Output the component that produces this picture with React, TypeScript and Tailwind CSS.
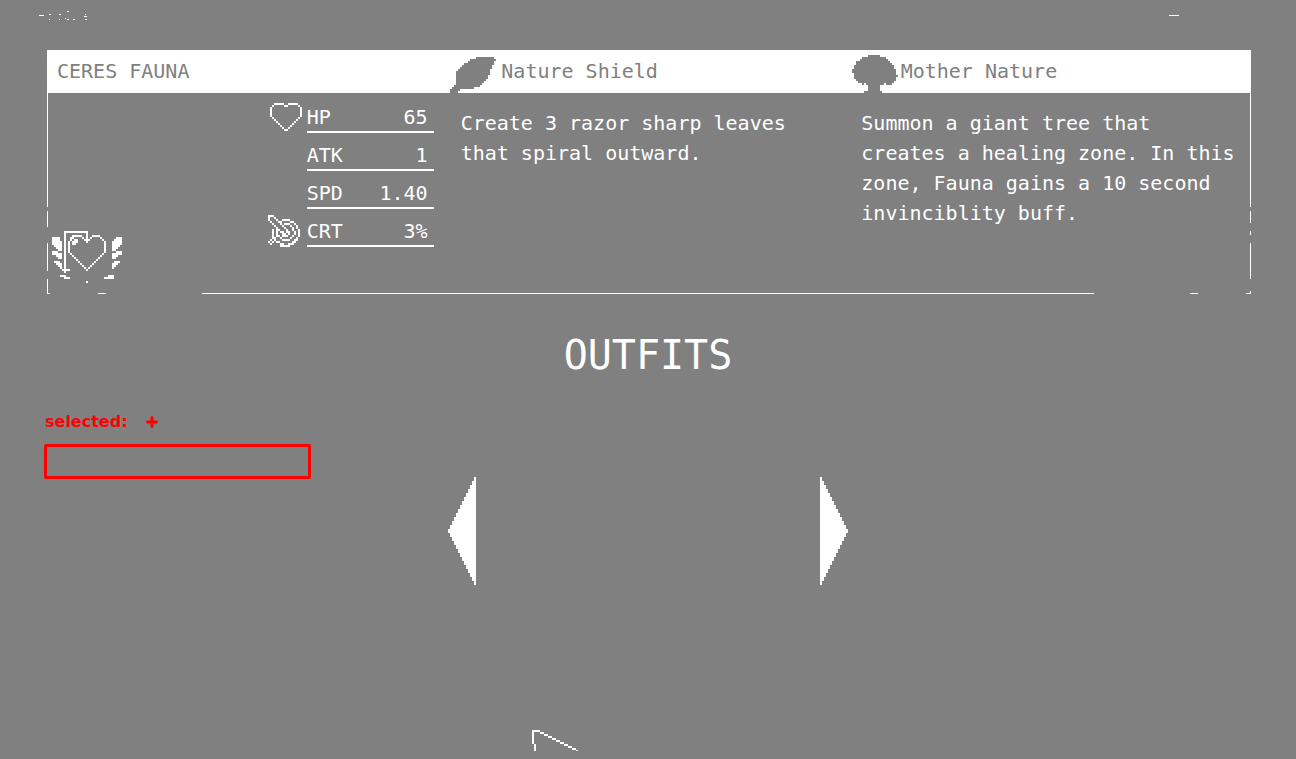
import React from 'react';

type Run = [row: number, from: number, to: number];

/* Draws horizontal runs of square cells, two pixels to a cell. */
function Pixels({ runs, cols, rows, className, label }: {
  runs: Run[]; cols: number; rows: number; className?: string; label: string;
}) {
  return (
    <svg
      role="img"
      aria-label={label}
      width={cols * 2}
      height={rows * 2}
      viewBox={`0 0 ${cols} ${rows}`}
      shapeRendering="crispEdges"
      fill="currentColor"
      className={className}
    >
      {runs.map(([r, a, b], i) => (
        <rect key={i} x={a} y={r} width={b - a + 1} height={1} />
      ))}
    </svg>
  );
}

function toRuns(bitmap: string[]): Run[] {
  const out: Run[] = [];
  bitmap.forEach((line, r) => {
    for (const m of line.matchAll(/#+/g)) out.push([r, m.index, m.index + m[0].length - 1]);
  });
  return out;
}

const heart = toRuns([
  '..#####..#####..',
  '.#.....##.....#.',
  '#..............#',
  '#..............#',
  '#..............#',
  '#..............#',
  '#..............#',
  '.#............#.',
  '..#..........#..',
  '...#........#...',
  '....#......#....',
  '.....#....#.....',
  '......#..#......',
  '.......##.......',
]);

const target = toRuns([
  '###.............',
  '#..#............',
  '#...#..####.....',
  '.#...##....##...',
  '..#...#.###..#..',
  '...#...#...#..#.',
  '....#...#...#.#.',
  '..#.##...#..#..#',
  '..#.#.##.##..#.#',
  '..#.#..##.#..#.#',
  '..#.##.###..#..#',
  '..##..#....#..#.',
  '.#.#...####..##.',
  '#.#.##......##..',
  '.#....##..###...',
  '......#####.....',
]);

const emblem = toRuns([
  '......############.................',
  '......#..........#.................',
  '......#...#####..#..####...........',
  '####..#..##....#.#.#....#.......###',
  '####..#..#.##...###......#.....####',
  '#####.#.#.###....#........#...#####',
  '#####.#.#.##..............#...#####',
  '.####.#.#.................#...####.',
  '..###.#.#.................#...###..',
  '...##.#.#.................#...##...',
  '###...#.#.................#.....###',
  '#####.#..#...............#....#####',
  '..###.#...#.............#.....###..',
  '...##.#....#...........#......##...',
  '......#.....#.........#............',
  '.###..#......#.......#.........###.',
  '..###.#.......#.....#.........###..',
  '...##.#........#...#..........##...',
  '....#.#.........#.#...........#....',
  '.....####........#.................',
  '......#............................',
  '...................................',
  '....###.....................###....',
  '......###.................#####....',
  '...................................',
  '.................#.................',
]);

const leaf: Run[] = [
  [0, 13, 21], [1, 10, 22], [2, 9, 21], [3, 7, 21], [4, 6, 20], [5, 5, 20],
  [6, 4, 19], [7, 3, 19], [8, 3, 19], [9, 3, 18], [10, 3, 18], [11, 3, 17],
  [12, 3, 16], [13, 3, 15], [14, 2, 14], [15, 1, 11], [16, 0, 4], [17, 0, 3],
];

const tree: Run[] = [
  [0, 8, 13], [1, 5, 16], [2, 4, 17], [3, 2, 18], [4, 2, 19], [5, 1, 20],
  [6, 1, 20], [7, 0, 21], [8, 0, 21], [9, 1, 21], [10, 1, 22], [11, 1, 21],
  [12, 2, 21], [13, 3, 20], [14, 5, 5], [14, 7, 15], [14, 17, 19], [15, 8, 13],
  [16, 8, 13], [17, 8, 13], [18, 6, 14],
];

const stats = [
  { name: 'HP', value: '65', icon: <Pixels runs={heart} cols={16} rows={14} label="Heart" className="ml-0.5" /> },
  { name: 'ATK', value: '1', icon: null },
  { name: 'SPD', value: '1.40', icon: null },
  { name: 'CRT', value: '3%', icon: <Pixels runs={target} cols={16} rows={16} label="Target" /> },
];

function Arrow({ flip, label }: { flip?: boolean; label: string }) {
  return (
    <button type="button" aria-label={label} className="text-white">
      <svg width="28" height="108" viewBox="0 0 28 108" shapeRendering="crispEdges" fill="currentColor" className={flip ? '-scale-x-100' : ''}>
        {Array.from({ length: 14 }, (_, k) => (
          <rect key={k} x={k * 2} y={52 - k * 4} width={2} height={4 + k * 8} />
        ))}
      </svg>
    </button>
  );
}

export default function App() {
  return (
    <main className="flex min-h-screen flex-col bg-[#808080] px-11 font-['DejaVu_Sans_Mono',monospace] text-xl text-white">
      <header className="flex h-[50px] items-start justify-between pt-[11px]">
        <svg role="img" aria-label="Logo" width="50" height="9" viewBox="0 0 50 9" shapeRendering="crispEdges" fill="currentColor" className="-ml-[5px]">
          <path d="M0 4h5v1H0zM10 3h2v1h-2zM10 8h1v1h-1zM20 3h2v1h-2zM20 8h1v1h-1zM26 7h1v1h-1zM28 0h2v1h-2zM28 8h2v1h-2zM34 8h2v1h-2zM46 3h1v1h-1zM45 5h3v1h-3zM46 8h2v1h-2z" />
        </svg>
        <button type="button" aria-label="Minimize" className="mr-[73px] flex h-[9px] w-2.5 items-center">
          <span className="h-px w-full bg-white" />
        </button>
      </header>

      <section className="mr-px ml-[3px]">
        <div className="grid h-[43px] grid-cols-3 bg-white leading-[43px] text-[#808080]">
          <h2 className="pl-2.5">CERES FAUNA</h2>
          <h2 className="flex items-end gap-[5px] pl-0.5">
            <Pixels runs={leaf} cols={23} rows={18} label="Leaf" />
            Nature Shield
          </h2>
          <h2 className="flex items-end gap-[3px] pl-0.5">
            <Pixels runs={tree} cols={23} rows={19} label="Tree" />
            Mother Nature
          </h2>
        </div>
        <div className="flex">
          <div className="flex w-px flex-col">
            <i className="h-[114px] bg-white" />
            <i className="mt-1 h-4 bg-white" />
            <i className="mt-4 h-7 bg-white" />
            <i className="mt-2 flex-1 bg-white" />
          </div>
          <div className="grid min-h-[200px] flex-1 grid-cols-3">
            <div className="flex items-start justify-between pt-0.5 pr-[15px] pl-1">
              <Pixels runs={emblem} cols={35} rows={26} label="Winged heart" className="mb-2.5 self-end" />
              <table className="w-[166px] border-separate border-spacing-0">
                <tbody>
                  {stats.map((s) => (
                    <tr key={s.name} className="h-[38px] leading-7">
                      <td className="w-[39px] p-0 pt-1.5">{s.icon}</td>
                      <th scope="row" className="border-b-2 border-white p-0 pt-2 text-left font-normal">{s.name}</th>
                      <td className="border-b-2 border-white p-0 pt-2 pr-1.5 text-right">{s.value}</td>
                    </tr>
                  ))}
                </tbody>
              </table>
            </div>
            <p className="px-3 pt-[15px] leading-[30px]">Create 3 razor sharp leaves that spiral outward.</p>
            <p className="px-3 pt-[15px] leading-[30px]">
              Summon a giant tree that creates a healing zone. In this zone, Fauna gains a 10 second invinciblity buff.
            </p>
          </div>
          <div className="flex w-px flex-col">
            <i className="h-[114px] bg-white" />
            <i className="mt-1 h-3 bg-white" />
            <i className="mt-2 h-1 bg-white" />
            <i className="mt-2 h-9 bg-white" />
            <i className="mt-3 flex-1 bg-white" />
          </div>
        </div>
        <div className="flex h-px">
          <i className="w-[3px] bg-white" />
          <i className="ml-12 w-2 bg-white" />
          <i className="ml-24 flex-1 bg-white" />
          <i className="ml-24 w-2 bg-white" />
          <i className="ml-12 w-[5px] bg-white" />
        </div>
      </section>

      <h1 className="mt-9 text-center text-[40px] leading-[50px]">OUTFITS</h1>

      <section className="mt-8 grid grid-cols-[1fr_400px_1fr]">
        <div className="font-['DejaVu_Sans',sans-serif] text-base leading-5 font-bold text-[#ff0000]">
          <div className="flex gap-[18px] pl-px">
            <label htmlFor="selected">selected:</label>
            <button type="button" aria-label="Add" className="font-black">
              <svg width="12" height="12" viewBox="0 0 12 12" fill="none" stroke="currentColor" strokeWidth="3" strokeLinecap="round">
                <path d="M6 1.5v9M1.5 6h9" />
              </svg>
            </button>
          </div>
          <input id="selected" className="mt-3 block h-[35px] w-[267px] rounded-xs border-3 border-[#ff0000] bg-transparent px-2 outline-none" />
        </div>
        <div className="flex justify-between pt-[65px]">
          <Arrow label="Previous outfit" />
          <Arrow label="Next outfit" flip />
        </div>
      </section>

      <div className="mx-auto mt-[145px] w-[232px]">
        <svg role="img" aria-label="Pointer" width="46" height="21" viewBox="0 0 46 21" shapeRendering="crispEdges" fill="currentColor">
          <path d="M0 0h8v2H2v12H0zM2 14h2v7H2z" />
          {Array.from({ length: 9 }, (_, k) => (
            <rect key={k} x={8 + k * 4} y={2 + k * 2} width={4} height={2} />
          ))}
          <rect x="44" y="20" width="2" height="1" />
        </svg>
      </div>
    </main>
  );
}
